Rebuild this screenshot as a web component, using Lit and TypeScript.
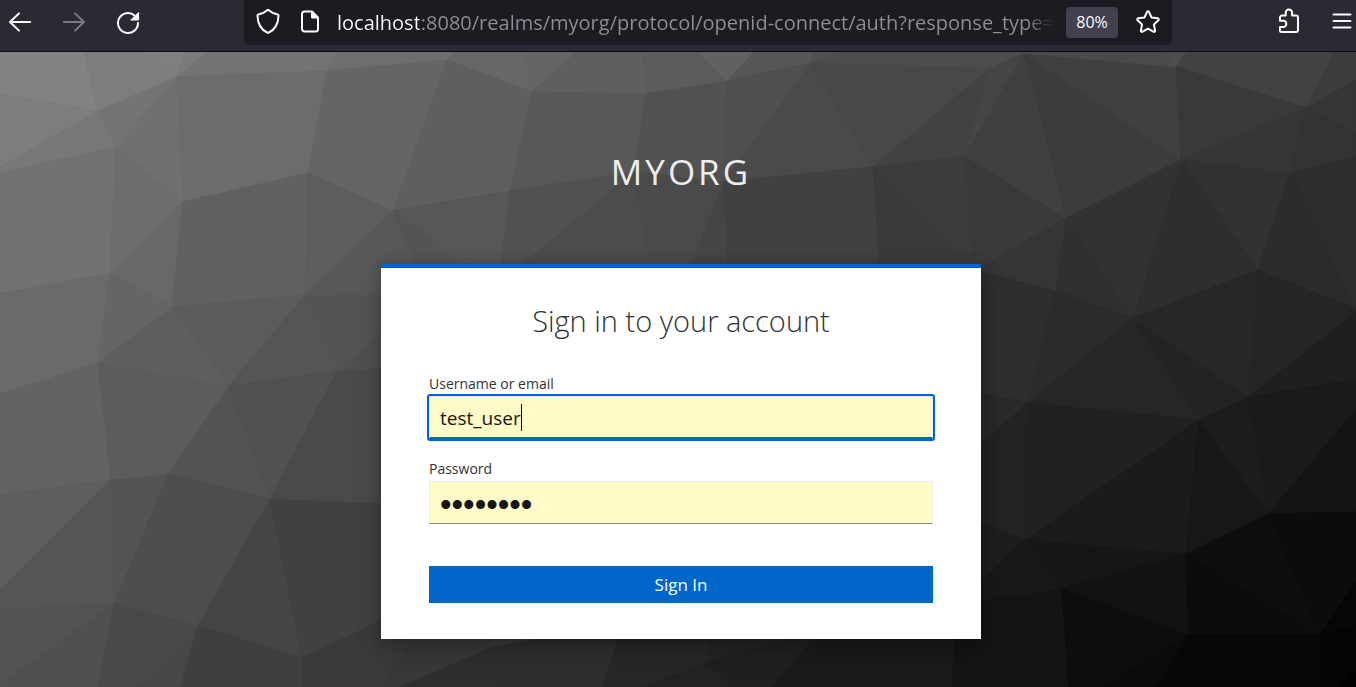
import { LitElement, html, css, svg } from "lit";
import { customElement, state } from "lit/decorators.js";

/* Facets of the backdrop: grey level, then the corners of the polygon. */
const FACETS: [number, string][] = [
  [130, "0,52 84,52 98,111 0,94"],
  [125, "84,52 145,52 177,77 98,111"],
  [127, "145,52 184,52 177,77"],
  [122, "184,52 208,52 177,77"],
  [115, "208,52 338,52 327,71 177,77"],
  [125, "0,94 98,111 0,167"],
  [120, "0,167 98,111 116,147 0,173"],
  [116, "98,111 177,77 116,147"],
  [112, "177,77 183,202 116,147"],
  [108, "177,77 327,71 308,173 183,202"],
  [110, "338,52 453,52 447,60 327,71"],
  [101, "327,71 447,60 393,211 308,173"],
  [114, "0,173 116,147 110,274 0,293"],
  [109, "116,147 183,202 110,274"],
  [104, "183,202 172,307 110,274"],
  [97, "183,202 308,173 305,295 172,307"],
  [93, "308,173 393,211 305,295"],
  [106, "0,293 110,274 98,363 0,394"],
  [101, "110,274 172,307 98,363"],
  [94, "172,307 229,386 98,363"],
  [91, "172,307 305,295 229,386"],
  [85, "305,295 229,386 337,371"],
  [84, "305,295 420,293 420,300 337,371"],
  [80, "337,371 420,300 420,367"],
  [99, "98,363 111,480 0,495 0,394"],
  [92, "98,363 229,386 168,475 111,480"],
  [83, "229,386 270,499 168,475"],
  [81, "229,386 337,371 270,499"],
  [74, "337,371 420,367 420,506 270,499"],
  [94, "0,495 111,480 0,590"],
  [86, "111,480 0,590 0,610 115,603"],
  [84, "111,480 168,475 115,603"],
  [83, "0,610 115,603 0,685"],
  [80, "115,603 0,685 0,687 98,687"],
  [78, "168,475 198,626 115,603"],
  [77, "168,475 270,499 198,626"],
  [73, "115,603 198,626 137,687 98,687"],
  [71, "198,626 137,687 181,687"],
  [69, "270,499 302,658 198,626"],
  [65, "270,499 420,506 420,602 302,658"],
  [63, "198,626 302,658 303,687 181,687"],
  [58, "302,658 420,602 411,640 383,687 303,687"],
  [56, "420,602 491,600 491,648 400,687 383,687 411,640"],
  [47, "491,648 400,687 497,687"],
  [46, "491,648 535,639 618,639 603,687 497,687"],
  [39, "618,639 711,639 707,663 644,687 603,687"],
  [36, "711,639 790,639 707,663"],
  [35, "707,663 644,687 731,687"],
  [32, "707,663 790,639 814,639 772,687 731,687"],
  [27, "814,639 821,639 818,687 772,687"],
  [26, "821,639 957,639 952,687 818,687"],
  [103, "453,52 525,52 532,92 447,60"],
  [101, "525,52 577,52 532,92"],
  [95, "577,52 643,52 646,94 532,92"],
  [92, "643,52 697,52 727,81 646,94"],
  [97, "697,52 754,52 727,81"],
  [86, "754,52 813,52 811,63 727,81"],
  [81, "813,52 839,52 811,63"],
  [77, "839,52 990,52 990,68 811,63"],
  [95, "447,60 532,92 510,191 393,211"],
  [88, "532,92 646,94 634,172 510,191"],
  [82, "646,94 727,81 724,182 634,172"],
  [79, "727,81 811,63 724,182"],
  [74, "811,63 873,167 724,182"],
  [72, "811,63 990,68 873,167"],
  [66, "873,167 990,68 965,156"],
  [77, "990,52 1024,52 1024,53 990,68"],
  [69, "990,68 1024,53 965,156"],
  [87, "393,211 510,191 501,264 465,264"],
  [84, "393,211 465,264 415,264"],
  [88, "393,211 415,264 415,294 305,295"],
  [81, "510,191 634,172 523,264 501,264"],
  [76, "634,172 523,264 650,264"],
  [74, "634,172 724,182 692,264 650,264"],
  [69, "724,182 692,264 728,264"],
  [65, "724,182 873,167 880,264 728,264"],
  [58, "873,167 880,264 968,264"],
  [60, "873,167 965,156 974,264 968,264"],
  [58, "965,156 974,272 1066,218"],
  [64, "965,156 1024,53 1066,218"],
  [60, "1024,53 1181,160 1066,218"],
  [64, "1024,53 1176,67 1181,160"],
  [74, "1024,52 1164,52 1176,67 1024,53"],
  [77, "1164,52 1187,52 1176,67"],
  [66, "1187,52 1335,52 1306,108 1176,67"],
  [60, "1335,52 1356,52 1356,80 1306,108"],
  [57, "1176,67 1306,108 1181,160"],
  [53, "1306,108 1290,174 1181,160"],
  [53, "1306,108 1356,80 1356,133"],
  [51, "1306,108 1356,133 1356,157 1290,174"],
  [50, "1181,160 1290,174 1258,270"],
  [45, "1290,174 1356,157 1356,309"],
  [43, "1290,174 1356,309 1258,270"],
  [46, "1181,160 1258,270 1133,318"],
  [50, "1181,160 1133,318 1066,218"],
  [48, "1066,218 1133,318 1055,291"],
  [53, "1066,218 1055,291 974,270"],
  [46, "974,270 1055,291 1028,403 974,392"],
  [43, "1055,291 1133,318 1028,403"],
  [38, "1133,318 1199,420 1028,403"],
  [35, "1133,318 1249,397 1199,420"],
  [39, "1133,318 1258,270 1249,397"],
  [37, "1258,270 1356,309 1356,312 1249,397"],
  [31, "1249,397 1356,312 1356,380"],
  [41, "974,392 1028,403 974,450"],
  [35, "1028,403 1025,540 974,520 974,450"],
  [33, "1028,403 1199,420 1025,540"],
  [27, "1199,420 1186,554 1025,540"],
  [23, "1199,420 1269,514 1186,554"],
  [28, "1199,420 1249,397 1269,514"],
  [26, "1249,397 1356,380 1356,409 1269,514"],
  [20, "1269,514 1356,409 1356,512"],
  [29, "974,520 1025,540 974,588"],
  [24, "1025,540 1062,589 974,603 974,588"],
  [22, "1025,540 1186,554 1062,589"],
  [18, "1062,589 1186,554 1189,635"],
  [20, "957,606 1062,589 1069,687 952,687"],
  [13, "1062,589 1189,635 1103,687 1069,687"],
  [11, "1189,635 1103,687 1157,687"],
  [14, "1186,554 1269,514 1320,635"],
  [12, "1186,554 1320,635 1189,635"],
  [12, "1269,514 1356,512 1356,582 1320,635"],
  [7, "1189,635 1320,635 1320,687 1157,687"],
  [7, "1320,635 1356,582 1356,626"],
  [4, "1320,635 1356,626 1356,672 1340,687 1320,687"],
  [1, "1356,672 1356,687 1340,687"],
];

const icon = (body: unknown) => html`
  <svg class="icon" width="24" height="24" viewBox="0 0 24 24" aria-hidden="true">${body}</svg>
`;

const ICONS = {
  back: svg`<path d="M22.2 12H2M11 3.4 2 12l9 8.6"/>`,
  forward: svg`<path d="M1.8 12H22M13 3.4 22 12l-9 8.6"/>`,
  reload: svg`<path d="M22 13a10 10 0 1 1-3.4-7.5"/><path class="solid" d="M22.6 2.8V10h-7.4z"/>`,
  shield: svg`<path d="M12-.2C9 2.4 6 3.8 2.2 4.6c-.5.1-.7.5-.7 1C1.7 13.5 5 19.6 11.2 22.5c.5.2 1.1.2 1.6 0C19 19.6 22.3 13.5 22.5 5.6c0-.5-.2-.9-.7-1C18 3.8 15 2.4 12-.2z"/>`,
  page: svg`<path d="M14 1.5H6.5A2.5 2.5 0 0 0 4 4v15a2.5 2.5 0 0 0 2.5 2.5h11A2.5 2.5 0 0 0 20 19V7.5z"/><path class="solid" d="M13.5 1.5V8H20z"/>`,
  star: svg`<path d="M12 1.3c.4 0 .8.2 1 .7l2.6 5.6 6.1.7c1 .1 1.4 1.3.7 2l-4.5 4.2 1.2 6c.2 1-.8 1.7-1.7 1.2L12 18.7l-5.4 3c-.9.5-1.9-.2-1.700-1.200l1.200-6-4.500-4.200c-.7-.7-.3-1.900.7-2l6.100-.7L11 2c.2-.5.6-.7 1-.7z"/>`,
  puzzle: svg`<path d="M4 7.5a2 2 0 0 1 2-2h3.700V2.800a3.200 3.200 0 0 1 6.400 0v2.700H20a2 2 0 0 1 2 2V20a2 2 0 0 1-2 2H5.500A1.500 1.500 0 0 1 4 20.500V17h3.200a3.100 3.100 0 0 0 0-6.200H4z"/>`,
  menu: svg`<path d="M3.5 4.5h17M3.5 11h17M3.5 17.5h17"/>`,
};

@customElement("browser-bar")
export class BrowserBar extends LitElement {
  static styles = css`
    :host {
      display: flex;
      align-items: flex-start;
      gap: 30px;
      padding: 0 2px 6px 8px;
      background: #2b2a33;
      border-bottom: 1px solid #0c0c0d;
      color: #fbfbfe;
      font-family: "Open Sans", "Noto Sans", sans-serif;
    }
    button {
      display: flex;
      align-items: center;
      justify-content: center;
      height: 44px;
      padding: 0;
      border: 0;
      background: none;
      color: inherit;
      font-family: inherit;
    }
    button:disabled {
      color: #7b7a82;
    }
    .icon {
      display: block;
      overflow: visible;
      fill: none;
      stroke: currentColor;
      stroke-width: 2;
      stroke-linecap: round;
      stroke-linejoin: round;
    }
    .solid {
      fill: currentColor;
      stroke-width: 1;
    }
    .field {
      flex: 1;
      min-width: 0;
      display: flex;
      align-items: center;
      height: 44px;
      margin: 0 74px;
      padding: 0 12px 1px;
      border-radius: 0 0 5px 5px;
      background: #1c1b22;
    }
    .page {
      margin: 0 15px 0 18px;
    }
    .url {
      flex: 1;
      min-width: 0;
      height: 40px;
      padding: 0;
      border: 0;
      outline: 0;
      background: linear-gradient(
        90deg,
        #fbfbfe 82px,
        #8f8e96 82px,
        #8f8e96 calc(100% - 28px),
        transparent
      );
      background-clip: text;
      -webkit-background-clip: text;
      color: transparent;
      font: 20px/28px "Open Sans", "Noto Sans", sans-serif;
    }
    .zoom {
      width: 52px;
      height: 31px;
      margin: 0 18px 0 12px;
      border-radius: 4px;
      background: #42414d;
      font-size: 16px;
    }
  `;

  render() {
    return html`
      <button aria-label="Back">${icon(ICONS.back)}</button>
      <button aria-label="Forward" disabled>${icon(ICONS.forward)}</button>
      <button aria-label="Reload">${icon(ICONS.reload)}</button>
      <div class="field">
        <button aria-label="Tracking protection">${icon(ICONS.shield)}</button>
        <button class="page" aria-label="Site information">${icon(ICONS.page)}</button>
        <input
          class="url"
          aria-label="Address"
          spellcheck="false"
          .value=${"localhost:8080/realms/myorg/protocol/openid-connect/auth?response_type=code"}
        />
        <button class="zoom">80%</button>
        <button aria-label="Bookmark">${icon(ICONS.star)}</button>
      </div>
      <button aria-label="Extensions">${icon(ICONS.puzzle)}</button>
      <button aria-label="Menu">${icon(ICONS.menu)}</button>
    `;
  }
}

@customElement("login-card")
export class LoginCard extends LitElement {
  static styles = css`
    :host {
      display: block;
      box-sizing: border-box;
      width: 100%;
      max-width: 600px;
      padding: 32px 48px 36px;
      border-top: 4px solid #0066cc;
      background: #fff;
      box-shadow: 0 13px 26px rgba(3, 3, 3, 0.2), 0 0 12px rgba(3, 3, 3, 0.2);
      color: #151515;
      font-family: "Open Sans", "Noto Sans", sans-serif;
    }
    h1 {
      margin: 0 0 32px;
      color: #333;
      font-size: 29px;
      line-height: 42px;
      font-weight: 300;
      text-align: center;
    }
    label {
      display: block;
      margin-bottom: 2px;
      font-size: 14px;
      line-height: 20px;
      color: #333;
    }
    .control {
      position: relative;
      margin-bottom: 20px;
    }
    .control.last {
      margin-bottom: 42px;
    }
    input {
      display: block;
      box-sizing: border-box;
      width: 100%;
      height: 43px;
      padding: 2px 10px 0;
      border: 1px solid #ececec;
      border-bottom-color: #8a8d90;
      border-radius: 0;
      outline: 0;
      background: #fffbc8;
      color: #151515;
      caret-color: transparent;
      font: 19px/28px "Open Sans", "Noto Sans", sans-serif;
    }
    .active {
      border-bottom: 2px solid #0066cc;
      border-radius: 1px;
      outline: 2px solid #0060df;
    }
    .secret {
      padding-top: 4px;
      font: 33px/36px "Liberation Sans", Arial, sans-serif;
    }
    .caret {
      position: absolute;
      left: 92px;
      top: 8px;
      width: 1px;
      height: 27px;
      background: #000;
    }
    .submit {
      display: block;
      width: 100%;
      height: 37px;
      padding: 0;
      border: 0;
      background: #0066cc;
      color: #fff;
      font: 17px/24px "Open Sans", "Noto Sans", sans-serif;
    }
  `;

  @state() private username = "test_user";
  @state() private password = "password";

  render() {
    return html`
      <h1>Sign in to your account</h1>
      <form @submit=${(e: Event) => e.preventDefault()}>
        <label for="username">Username or email</label>
        <div class="control">
          <input id="username" class="active" type="text" .value=${this.username} />
          <span class="caret"></span>
        </div>
        <label for="password">Password</label>
        <div class="control last">
          <input id="password" class="secret" type="password" .value=${this.password} />
        </div>
        <button class="submit" type="submit">Sign In</button>
      </form>
    `;
  }
}

@customElement("app-root")
export class AppRoot extends LitElement {
  static styles = css`
    :host {
      display: flex;
      flex-direction: column;
      min-height: 100vh;
      font-family: "Open Sans", "Noto Sans", sans-serif;
    }
    .stage {
      flex: 1;
      display: grid;
      background: linear-gradient(135deg, #828282, #000);
    }
    .backdrop {
      grid-area: 1 / 1;
      width: 100%;
      height: 100%;
      min-height: 0;
      contain: size;
    }
    .facet {
      stroke-width: 1;
    }
    main {
      grid-area: 1 / 1;
      position: relative;
      display: flex;
      flex-direction: column;
      align-items: center;
      padding: 92px 18px 48px 24px;
    }
    .realm {
      margin: 0 0 64px;
      color: #ededed;
      font-size: 35px;
      line-height: 56px;
      font-weight: 400;
      letter-spacing: 3px;
      text-transform: uppercase;
    }
  `;

  render() {
    return html`
      <browser-bar></browser-bar>
      <div class="stage">
        <svg
          class="backdrop"
          viewBox="0 52 1356 635"
          preserveAspectRatio="xMidYMid slice"
          aria-hidden="true"
        >
          ${FACETS.map(([level, points]) => {
            const fill = `rgb(${level},${level},${level})`;
            return svg`<polygon class="facet" points=${points} fill=${fill} stroke=${fill} />`;
          })}
        </svg>
        <main>
          <div class="realm">myorg</div>
          <login-card></login-card>
        </main>
      </div>
    `;
  }
}
